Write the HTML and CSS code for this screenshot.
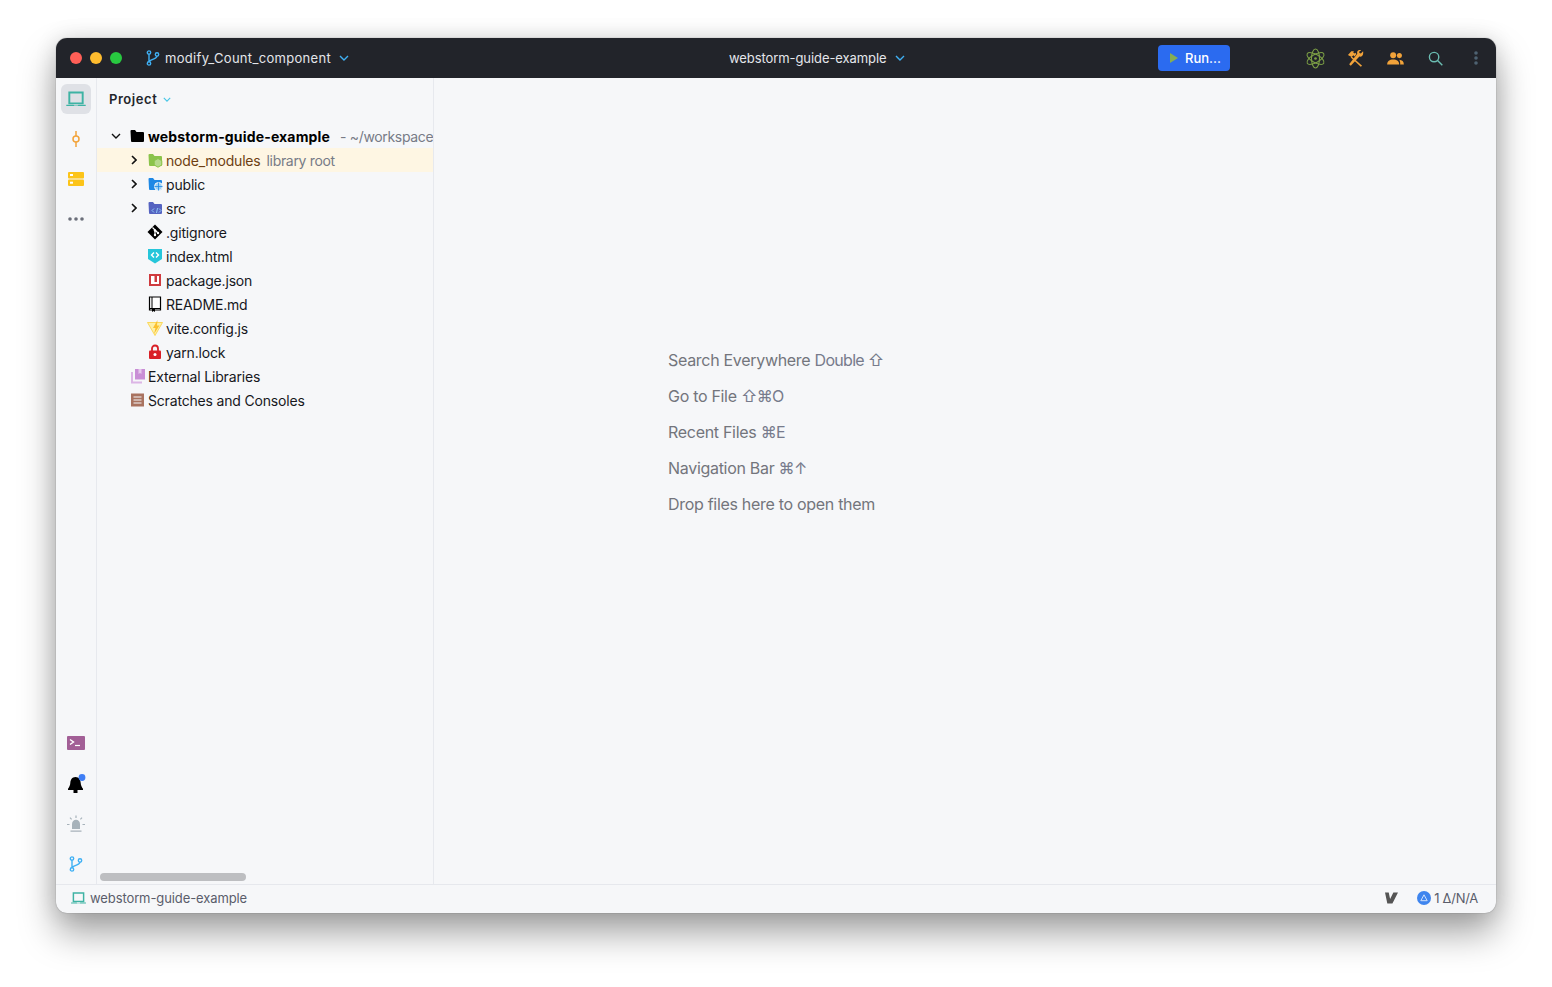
FILE: index.html
```html
<!DOCTYPE html>
<html lang="en">
<head>
<meta charset="utf-8">
<title>webstorm-guide-example</title>
<link rel="stylesheet" href="styles.css">
</head>
<body>
<svg class="defs" width="0" height="0" aria-hidden="true">
  <symbol id="laptop" viewBox="0 0 16 14"><path d="M2.500 1.200h11v9h-11z" fill="none" stroke="currentColor" stroke-width="1.600"/><path d="M0 11.300h6l.6.7h2.800l.6-.7h6v1.100H0z" fill="currentColor"/></symbol>
  <symbol id="branch" viewBox="0 0 14 16"><g fill="none" stroke="currentColor" stroke-width="1.400"><circle cx="3" cy="2.600" r="1.700"/><circle cx="3" cy="13.400" r="1.700"/><circle cx="11" cy="4.400" r="1.700"/><path d="M3 4.300v7.400M11 6.100c0 3-4.500 2.600-7.600 5"/></g></symbol>
  <symbol id="chev-down" viewBox="0 0 10 6"><path d="M1 1l4 4 4-4" fill="none" stroke="currentColor" stroke-width="1.400"/></symbol>
  <symbol id="chev-right" viewBox="0 0 6 10"><path d="M1 1l4 4-4 4" fill="none" stroke="currentColor" stroke-width="1.600"/></symbol>
  <symbol id="folder" viewBox="0 0 16 16"><path d="M1.500 3a1 1 0 0 1 1-1h3.500l1.500 2h6.500a1 1 0 0 1 1 1v8a1 1 0 0 1-1 1h-11a1 1 0 0 1-1-1z" fill="currentColor"/></symbol>
</svg>
<div class="window">
  <header class="titlebar">
    <div class="lights"><span class="light red"></span><span class="light amber"></span><span class="light green"></span></div>
    <div class="branch">
      <svg class="branch-icon"><use href="#branch"/></svg>
      <span class="branch-name">modify_Count_component</span>
      <svg class="chev-blue"><use href="#chev-down"/></svg>
    </div>
    <div class="project-name">
      <span>webstorm-guide-example</span>
      <svg class="chev-blue"><use href="#chev-down"/></svg>
    </div>
    <button class="run" type="button"><svg class="run-icon" viewBox="0 0 8 10"><path d="M0 0l8 5-8 5z"/></svg>Run...</button>
    <div class="tools">
      <span class="tool"><svg class="t-atom" viewBox="0 0 22 22" fill="none" stroke="#7c9f45" stroke-width="1.100"><ellipse cx="11" cy="11" rx="10" ry="4.200" transform="rotate(30 11 11)"/><ellipse cx="11" cy="11" rx="10" ry="4.200" transform="rotate(90 11 11)"/><ellipse cx="11" cy="11" rx="10" ry="4.200" transform="rotate(150 11 11)"/><circle cx="11" cy="11" r="1.400" fill="#7c9f45" stroke="none"/></svg></span>
      <span class="tool"><svg class="t-tools" viewBox="0 0 18 18" fill="#f2a33a"><path d="M1 5.200L4.600 1.400h2.800l-.8 1.100 1 1.200 1.300-.7 1 1.200L8 6.800 6.800 5.600 4.900 7.500z"/><path d="M5 6.800l11 10-1.400 1L4 8z"/><path d="M17 1.200l-2.300 2.500-1.500-.4-.4-1.500L15 .2c-1.900-.8-4.100.3-4.300 2.300 0 .6 0 1 .2 1.400L2.300 15.200 4 16.700 13.100 7c2.300.7 4.800-1.500 3.900-5.800z"/></svg></span>
      <span class="tool"><svg class="t-people" viewBox="0 0 18 14" fill="#f2a33a"><circle cx="6.500" cy="3.600" r="3.200"/><circle cx="13.200" cy="3.900" r="2.700"/><path d="M0 13.500c0-3.800 2.600-5.500 6.500-5.500s6.500 1.700 6.500 5.500z"/><path d="M14 13.500h4c0-3.300-1.800-5-5-5.200 1 1.300 1.200 3.200 1 5.200z"/></svg></span>
      <span class="tool"><svg class="t-search" viewBox="0 0 16 16" fill="none" stroke="#6bbdb2" stroke-width="1.500"><circle cx="6.500" cy="6.500" r="5"/><path d="M10.200 10.200L15.300 15.300"/></svg></span>
      <span class="tool"><svg class="t-dots" viewBox="0 0 4 14" fill="#4e6272"><circle cx="2" cy="2" r="1.800"/><circle cx="2" cy="7" r="1.800"/><circle cx="2" cy="12" r="1.800"/></svg></span>
    </div>
  </header>

  <div class="main">
    <nav class="rail">
      <div class="rail-group">
        <div class="rail-item active"><svg class="rail-laptop"><use href="#laptop"/></svg></div>
        <div class="rail-item"><svg class="rail-icon" viewBox="0 0 16 16" fill="none" stroke="#f2a33a" stroke-width="1.500"><circle cx="8" cy="8" r="3"/><path d="M8 0v5M8 11v5"/></svg></div>
        <div class="rail-item"><svg class="rail-icon" viewBox="0 0 16 16"><rect y="1" width="16" height="6.500" rx="1" fill="#fcc419"/><rect y="8.500" width="16" height="6.500" rx="1" fill="#fcc419"/><rect x="2" y="3" width="3" height="2" fill="#fff"/><rect x="2" y="10.700" width="3" height="2" fill="#fff"/></svg></div>
        <div class="rail-item"><svg class="rail-icon" viewBox="0 0 16 16" fill="#6b6f7a"><circle cx="2" cy="8" r="1.800"/><circle cx="8" cy="8" r="1.800"/><circle cx="14" cy="8" r="1.800"/></svg></div>
      </div>
      <div class="rail-group">
        <div class="rail-item"><svg class="rail-term" viewBox="0 0 18 14"><rect width="18" height="14" rx="1" fill="#a25f96"/><path d="M3 3.500L6.500 6 3 8.500" fill="none" stroke="#fff" stroke-width="1.400"/><path d="M8 9.500h5" stroke="#fff" stroke-width="1.200"/></svg></div>
        <div class="rail-item"><svg class="rail-lg" viewBox="0 0 20 20"><path d="M9.500 3c3.500 0 5 2.800 5.200 6 .1 2.700 1.300 4.300 2.300 5.800v1.200H2v-1.200c1-1.500 2.200-3.100 2.300-5.800.2-3.200 1.700-6 5.200-6z" fill="#000"/><rect x="7.500" y="16" width="4" height="3" fill="#000"/><circle cx="16" cy="3.500" r="3.400" fill="#3f7ef5"/></svg></div>
        <div class="rail-item"><svg class="rail-lg" viewBox="0 0 20 20"><path d="M6 15v-5c0-2.700 1.800-4.300 4-4.300s4 1.600 4 4.300v5z" fill="#a7b2ba"/><path d="M4.500 16.500h11v1.300h-11z" fill="#a7b2ba"/><path d="M10 1.500v2.500M4 3.700l1.600 1.600M16 3.700l-1.600 1.600M1 10.500h2.500M16.500 10.500H19" stroke="#a7b2ba" stroke-width="1.200"/></svg></div>
        <div class="rail-item"><svg class="rail-branch"><use href="#branch"/></svg></div>
      </div>
    </nav>

    <aside class="panel">
      <div class="panel-head"><span>Project</span><svg class="chev-cyan"><use href="#chev-down"/></svg></div>
      <ul class="tree">
        <li class="row lvl0 root">
          <svg class="arrow-down"><use href="#chev-down"/></svg>
          <svg class="icon c-black"><use href="#folder"/></svg>
          <b>webstorm-guide-example</b><span class="hint path">- ~/workspace</span>
        </li>
        <li class="row lvl1 library">
          <svg class="arrow"><use href="#chev-right"/></svg>
          <svg class="icon c-green" viewBox="0 0 16 16"><use href="#folder"/><path d="M11 6.500l3.800 2.200v4.300L11 15.200l-3.800-2.200V8.700z" fill="#b5d98c" stroke="#8bc34a"/></svg>
          <span class="lib-name">node_modules</span><span class="hint">library root</span>
        </li>
        <li class="row lvl1">
          <svg class="arrow"><use href="#chev-right"/></svg>
          <svg class="icon c-blue" viewBox="0 0 16 16"><use href="#folder"/><circle cx="11.500" cy="10.500" r="4" fill="#9ad0f5" stroke="#f5f6f8"/><path d="M7.500 10.500h8M11.500 6.500v8" stroke="#1e88e5" stroke-width=".8"/></svg>
          <span>public</span>
        </li>
        <li class="row lvl1">
          <svg class="arrow"><use href="#chev-right"/></svg>
          <svg class="icon c-indigo" viewBox="0 0 16 16"><use href="#folder"/><path d="M7 8.500l-2 2 2 2M12 8.500l2 2-2 2M10.500 8l-1 5" fill="none" stroke="#8ec8f6" stroke-width="1"/></svg>
          <span>src</span>
        </li>
        <li class="row lvl1 file">
          <svg class="icon" viewBox="0 0 16 16"><path d="M8 .5L15.500 8 8 15.500.5 8z" fill="#000"/><path d="M5.500 3.500L11 9" stroke="#fff" stroke-width="1.200"/><path d="M8 6.500v5" stroke="#fff" stroke-width="1.200"/><circle cx="8" cy="6.500" r="1.200" fill="#fff"/><circle cx="8" cy="11" r="1.200" fill="#fff"/><circle cx="11" cy="9" r="1.200" fill="#fff"/></svg>
          <span>.gitignore</span>
        </li>
        <li class="row lvl1 file">
          <svg class="icon" viewBox="0 0 16 16"><path d="M1 1h14v10l-7 4.500L1 11z" fill="#26c6da"/><path d="M7 4.500L4.500 7 7 9.500M9 4.500L11.500 7 9 9.500" fill="none" stroke="#fff" stroke-width="1.400"/></svg>
          <span>index.html</span>
        </li>
        <li class="row lvl1 file">
          <svg class="icon" viewBox="0 0 16 16"><path d="M3 3h10v10H3z" fill="#fff" stroke="#cf3b3f" stroke-width="2"/><path d="M7.500 3h2.500v7H7.500z" fill="#cf3b3f"/></svg>
          <span>package.json</span>
        </li>
        <li class="row lvl1 file">
          <svg class="icon" viewBox="0 0 16 16"><path d="M2.500 1h11v11.500h-11zM2.500 12.500h11v1.500h-11z" fill="#fff" stroke="#000" stroke-width="1.200"/><path d="M5 1v11" stroke="#000" stroke-width="1"/><path d="M5 13h3v3L6.500 15 5 16z" fill="#000"/></svg>
          <span>README.md</span>
        </li>
        <li class="row lvl1 file">
          <svg class="icon" viewBox="0 0 16 16"><path d="M.500 2.500h15L8 15.500z" fill="#fdf0a8" stroke="#fbd13d" stroke-width=".8"/><path d="M10.500 0L6 8h2.500L7 14l5.500-8.500H10z" fill="#fbc02d"/></svg>
          <span>vite.config.js</span>
        </li>
        <li class="row lvl1 file">
          <svg class="icon" viewBox="0 0 16 16"><path d="M5 7V4.500a3 3 0 0 1 6 0V7" fill="none" stroke="#d92027" stroke-width="1.800"/><rect x="2" y="6.500" width="12" height="8.500" rx="1" fill="#d92027"/><circle cx="8" cy="10.500" r="1.500" fill="#fff"/></svg>
          <span>yarn.lock</span>
        </li>
        <li class="row lvl0 file">
          <svg class="icon" viewBox="0 0 16 16"><path d="M5 1h10v10.500H5z" fill="#c98ed6"/><path d="M2 4v10.500h10" fill="none" stroke="#dcb6e6" stroke-width="2"/><path d="M8.500 1v5l1.500-1 1.500 1V1z" fill="#e5c8ec"/></svg>
          <span>External Libraries</span>
        </li>
        <li class="row lvl0 file">
          <svg class="icon" viewBox="0 0 16 16"><rect x="1" y="1.500" width="13" height="13" fill="#a97360"/><path d="M3.500 5h8M3.500 8h8M3.500 11h8" stroke="#f6f7f9" stroke-width="1.200"/></svg>
          <span>Scratches and Consoles</span>
        </li>
      </ul>
      <div class="scrollbar"></div>
    </aside>

    <section class="editor">
      <ul class="hints">
        <li>Search Everywhere <span class="key">Double ⇧</span></li>
        <li>Go to File <span class="key">⇧⌘O</span></li>
        <li>Recent Files <span class="key">⌘E</span></li>
        <li>Navigation Bar <span class="key">⌘↑</span></li>
        <li>Drop files here to open them</li>
      </ul>
    </section>
  </div>

  <footer class="status">
    <svg class="status-laptop"><use href="#laptop"/></svg>
    <span class="status-name">webstorm-guide-example</span>
    <svg class="vim" viewBox="0 0 14 12" fill="#555"><path d="M0 0h4l1.500 7L9 0h5L8 12H2.500z"/></svg>
    <svg class="delta" viewBox="0 0 14 14"><circle cx="7" cy="7" r="7" fill="#3f85ee"/><path d="M7 3.800L10.200 9.700H3.800z" fill="none" stroke="#cfe0fb" stroke-width="1"/></svg>
    <span class="status-delta">1 Δ/N/A</span>
  </footer>
</div>
</body>
</html>
```

FILE: styles.css
```css
* { box-sizing: border-box; }

html, body { margin: 0; height: 100%; }

body {
  background: #fff;
  padding: 38px 56px 74px;
  font-family: Inter, "Noto Sans", "DejaVu Sans", sans-serif;
  overflow: hidden;
}

.defs { display: block; }

ul { list-style: none; margin: 0; padding: 0; }

.window {
  height: 875px;
  border-radius: 11px;
  overflow: hidden;
  display: flex;
  flex-direction: column;
  background: #f6f7f9;
  box-shadow: 0 0 1px rgba(0, 0, 0, .5), 0 20px 36px rgba(0, 0, 0, .36), 0 0 22px rgba(0, 0, 0, .12);
}

/* title bar */
.titlebar {
  flex: none;
  height: 40px;
  background: #22242a;
  color: #e4e6ea;
  display: flex;
  align-items: center;
  font-size: 13px;
  padding-left: 14px;
}

.lights { display: flex; gap: 8px; }
.light { width: 12px; height: 12px; border-radius: 50%; }
.light.red { background: #ff5f57; }
.light.amber { background: #febc2e; }
.light.green { background: #28c840; }

.branch {
  width: 583px;
  margin-left: 24px;
  display: flex;
  align-items: center;
}
.branch-icon { width: 14px; height: 16px; color: #3fb0f4; margin-right: 5px; }
.branch-name { letter-spacing: .31px; }
.chev-blue { width: 10px; height: 6px; color: #3fb0f4; margin-left: 8px; }

.project-name { width: 429px; display: flex; align-items: center; letter-spacing: -.08px; }

.run {
  width: 72px;
  height: 26px;
  border: 0;
  border-radius: 4px;
  background: #2b6bf0;
  color: #fff;
  font: 500 13px Inter, sans-serif;
  display: flex;
  align-items: center;
  padding: 0 0 0 12px;
  gap: 7px;
}
.run-icon { width: 8px; height: 10px; fill: #86ad52; }

.tools {
  margin-left: 75px;
  display: flex;
  align-items: center;
  gap: 20px;
}
.tool { width: 20px; height: 20px; display: flex; align-items: center; justify-content: center; }
.t-atom { width: 21px; height: 21px; flex: none; }
.t-tools { width: 17px; height: 17px; }
.t-people { width: 17px; height: 13px; }
.t-search { width: 15px; height: 15px; }
.t-dots { width: 4px; height: 14px; margin-left: 2px; }

/* main */
.main { flex: 1; min-height: 0; display: flex; }

.rail {
  flex: none;
  width: 41px;
  border-right: 1px solid #e7e9ee;
  display: flex;
  flex-direction: column;
  justify-content: space-between;
  padding: 6px 0 5px 5px;
}
.rail-group { display: flex; flex-direction: column; gap: 10px; }
.rail-item {
  width: 30px;
  height: 30px;
  border-radius: 6px;
  display: flex;
  align-items: center;
  justify-content: center;
}
.rail-item.active { background: #dfe1e6; }
.rail-laptop { width: 20px; height: 17px; color: #3eb3a4; }
.rail-icon { width: 16px; height: 16px; }
.rail-lg { width: 20px; height: 20px; }
.rail-term { width: 18px; height: 14px; margin-bottom: 2px; }
.rail-branch { width: 14px; height: 16px; color: #3fb0f4; }

.panel {
  flex: none;
  width: 337px;
  border-right: 1px solid #e7e9ee;
  display: flex;
  flex-direction: column;
  overflow: hidden;
}
.panel-head {
  height: 42px;
  padding: 0 0 0 12px;
  display: flex;
  align-items: center;
  font-size: 13px;
  font-weight: 600;
  letter-spacing: .55px;
  color: #23252b;
  flex: none;
}
.chev-cyan { width: 8px; height: 5px; color: #45c6e6; margin-left: 6px; }

.tree { flex: 1; padding-top: 4px; font-size: 14px; letter-spacing: -.18px; color: #16181d; }
.row {
  height: 24px;
  display: flex;
  align-items: center;
  white-space: nowrap;
}
.lvl0 { padding-left: 14px; }
.lvl1 { padding-left: 34px; }
.lvl0.file { padding-left: 33px; }
.lvl1.file { padding-left: 51px; }
.root b { font-weight: 700; letter-spacing: .16px; color: #000; }
.library { background: #fef6e3; }
.lib-name { color: #6d3f12; }
.hint { color: #777b86; margin-left: 6px; letter-spacing: -.33px; }
.path { margin-left: 10px; }

.arrow-down { width: 10px; height: 6px; color: #111; margin-right: 9px; flex: none; }
.arrow { width: 6px; height: 10px; color: #111; margin-right: 11px; flex: none; }
.icon { width: 16px; height: 16px; margin: 0 3px 0 -1px; flex: none; }
.lvl0.file .icon { margin: 0 2px 0 0; }
.c-black { color: #000; }
.c-green { color: #8bc34a; }
.c-blue { color: #1e88e5; }
.c-indigo { color: #5563c1; }

.scrollbar {
  flex: none;
  width: 146px;
  height: 8px;
  margin: 0 0 3px 3px;
  border-radius: 4px;
  background: #bdbec1;
}

/* editor */
.editor {
  flex: 1;
  min-width: 0;
  padding: 264px 0 0 234px;
  font-size: 16px;
  letter-spacing: -.3px;
  color: #73757c;
}
.hints li { height: 36px; line-height: 36px; white-space: nowrap; }
.key { color: #777b8c; letter-spacing: -.7px; }

/* status bar */
.status {
  flex: none;
  height: 29px;
  border-top: 1px solid #e6e8ed;
  display: flex;
  align-items: center;
  padding: 0 18px 2px 15px;
  font-size: 13px;
  color: #5a5d6b;
}
.status-laptop { width: 15px; height: 13px; color: #3eb3a4; margin-right: 4px; }
.status-name { flex: 1; letter-spacing: -.1px; }
.vim { width: 13px; height: 12px; margin-right: 19px; }
.delta { width: 14px; height: 14px; margin-right: 3px; }
.status-delta { letter-spacing: -.3px; }
```
